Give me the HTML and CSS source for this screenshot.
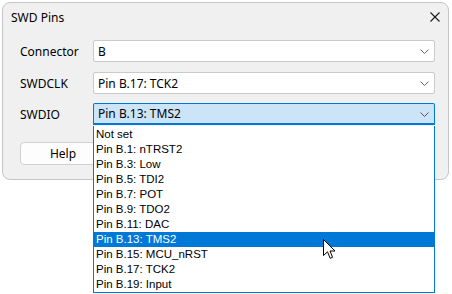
FILE: index.html
```html
<!DOCTYPE html>
<html lang="en">
<head>
  <meta charset="UTF-8">
  <title>SWD Pins</title>
  <link rel="stylesheet" href="styles.css">
</head>
<body>
  <div class="window">
    <div class="titlebar">
      <span class="title">SWD Pins</span>
      <span class="close">
        <svg width="10" height="10" viewBox="0 0 10 10">
          <path d="M0.5 0.5L9.5 9.5M9.5 0.5L0.5 9.5" stroke="#1a1a1a" stroke-width="1.1" fill="none"/>
        </svg>
      </span>
    </div>
    <div class="form">
      <div class="row first">
        <label>Connector</label>
        <div class="combo">
          <span>B</span>
          <svg class="chevron" width="9" height="5" viewBox="0 0 9 5"><path d="M0.5 0.5L4.5 4.5L8.5 0.5" stroke="#666" fill="none"/></svg>
        </div>
      </div>
      <div class="row">
        <label>SWDCLK</label>
        <div class="combo">
          <span>Pin B.17: TCK2</span>
          <svg class="chevron" width="9" height="5" viewBox="0 0 9 5"><path d="M0.5 0.5L4.5 4.5L8.5 0.5" stroke="#666" fill="none"/></svg>
        </div>
      </div>
      <div class="row">
        <label>SWDIO</label>
        <div class="combo open">
          <span>Pin B.13: TMS2</span>
          <svg class="chevron" width="9" height="5" viewBox="0 0 9 5"><path d="M0.5 0.5L4.5 4.5L8.5 0.5" stroke="#555" fill="none"/></svg>
        </div>
      </div>
      <button class="button">Help</button>
    </div>
  </div>

  <!-- popup list of the open SWDIO combo -->
  <ul class="dropdown">
    <li>Not set</li>
    <li>Pin B.1: nTRST2</li>
    <li>Pin B.3: Low</li>
    <li>Pin B.5: TDI2</li>
    <li>Pin B.7: POT</li>
    <li>Pin B.9: TDO2</li>
    <li>Pin B.11: DAC</li>
    <li class="selected">Pin B.13: TMS2</li>
    <li>Pin B.15: MCU_nRST</li>
    <li>Pin B.17: TCK2</li>
    <li>Pin B.19: Input</li>
  </ul>
  <svg class="cursor" width="13" height="21" viewBox="0 0 13 21">
    <path d="M0.5 0.5L0.5 16.5L4.5 12.8L7.2 19.3L9.6 18.3L7 12L12 12Z" fill="#fff" stroke="#000" stroke-width="1" stroke-linejoin="round"/>
  </svg>
</body>
</html>
```

FILE: styles.css
```css
html, body {
  height: 100%;
}
body {
  margin: 0;
  position: relative;
  background-color: #fff;
  font-family: "Noto Sans", "Liberation Sans", sans-serif;
  font-size: 12px;
  color: #000;
}
.window {
  position: absolute;
  left: 2px;
  top: 2px;
  width: 445px;
  height: 176px;
  border: 1px solid #c6c6c6;
  border-radius: 8px;
  background-color: #f0f0f0;
}
.titlebar {
  height: 28px;
  display: flex;
  align-items: center;
  justify-content: space-between;
  padding: 0 8px;
}
.close {
  display: flex;
}
.form {
  padding: 9px 13px 0 17px;
}
.row {
  display: flex;
  align-items: center;
  margin-bottom: 9px;
}
.row.first {
  margin-bottom: 10px;
}
.row label {
  width: 73px;
}
.combo {
  flex: 1;
  height: 20px;
  display: flex;
  align-items: center;
  justify-content: space-between;
  padding: 0 5px 0 4px;
  background-color: #fff;
  border: 1px solid #cacaca;
  border-radius: 2px;
}
.combo.open {
  background-color: #cce4f7;
  border-color: #0078d7;
  border-bottom-width: 2px;
  height: 19px;
  border-radius: 2px 2px 0 0;
}
.chevron {
  margin-top: 1px;
}
.button {
  margin-top: 8px;
  width: 86px;
  height: 23px;
  background-color: #fdfdfd;
  border: 1px solid #d0d0d0;
  border-radius: 4px;
  font-family: "Noto Sans", "Liberation Sans", sans-serif;
  font-size: 12px;
  color: #000;
  padding: 0;
}
.dropdown {
  position: absolute;
  left: 93px;
  top: 126px;
  width: 340px;
  margin: 0;
  padding: 1px 0 0;
  list-style: none;
  background-color: #fff;
  border: 1px solid #0078d7;
  border-top: none;
  font-family: "Liberation Sans", sans-serif;
  font-size: 11.5px;
}
.dropdown li {
  height: 15px;
  line-height: 15px;
  padding-left: 2px;
}
.dropdown li.selected {
  background-color: #0078d7;
  color: #fff;
}
.cursor {
  position: absolute;
  left: 323px;
  top: 239px;
}
```
